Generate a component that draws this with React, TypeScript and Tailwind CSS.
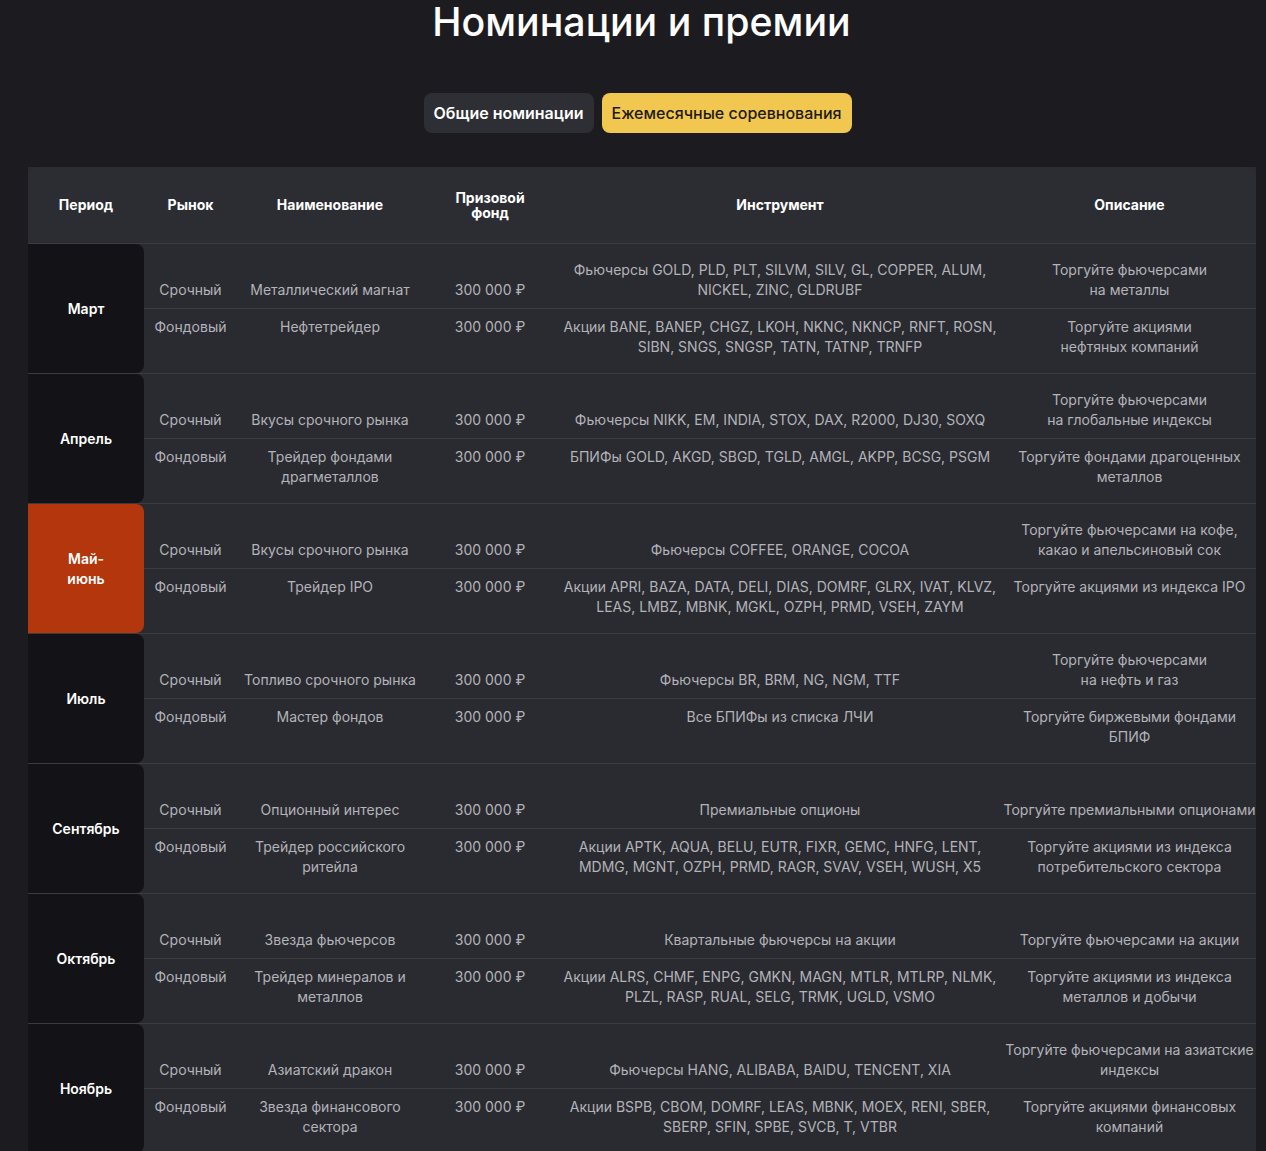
import React from "react";

type Row = {
  market: string;
  name: string[];
  prize: string;
  instrument: string[];
  desc: string[];
};

type Group = {
  period: string[];
  active?: boolean;
  rows: [Row, Row];
};

const groups: Group[] = [
  {
    period: ["Март"],
    rows: [
      {
        market: "Срочный",
        name: ["Металлический магнат"],
        prize: "300 000 ₽",
        instrument: ["Фьючерсы GOLD, PLD, PLT, SILVM, SILV, GL, COPPER, ALUM,", "NICKEL, ZINC, GLDRUBF"],
        desc: ["Торгуйте фьючерсами", "на металлы"],
      },
      {
        market: "Фондовый",
        name: ["Нефтетрейдер"],
        prize: "300 000 ₽",
        instrument: ["Акции BANE, BANEP, CHGZ, LKOH, NKNC, NKNCP, RNFT, ROSN,", "SIBN, SNGS, SNGSP, TATN, TATNP, TRNFP"],
        desc: ["Торгуйте акциями", "нефтяных компаний"],
      },
    ],
  },
  {
    period: ["Апрель"],
    rows: [
      {
        market: "Срочный",
        name: ["Вкусы срочного рынка"],
        prize: "300 000 ₽",
        instrument: ["Фьючерсы NIKK, EM, INDIA, STOX, DAX, R2000, DJ30, SOXQ"],
        desc: ["Торгуйте фьючерсами", "на глобальные индексы"],
      },
      {
        market: "Фондовый",
        name: ["Трейдер фондами", "драгметаллов"],
        prize: "300 000 ₽",
        instrument: ["БПИФы GOLD, AKGD, SBGD, TGLD, AMGL, AKPP, BCSG, PSGM"],
        desc: ["Торгуйте фондами драгоценных", "металлов"],
      },
    ],
  },
  {
    period: ["Май-", "июнь"],
    active: true,
    rows: [
      {
        market: "Срочный",
        name: ["Вкусы срочного рынка"],
        prize: "300 000 ₽",
        instrument: ["Фьючерсы COFFEE, ORANGE, COCOA"],
        desc: ["Торгуйте фьючерсами на кофе,", "какао и апельсиновый сок"],
      },
      {
        market: "Фондовый",
        name: ["Трейдер IPO"],
        prize: "300 000 ₽",
        instrument: ["Акции APRI, BAZA, DATA, DELI, DIAS, DOMRF, GLRX, IVAT, KLVZ,", "LEAS, LMBZ, MBNK, MGKL, OZPH, PRMD, VSEH, ZAYM"],
        desc: ["Торгуйте акциями из индекса IPO"],
      },
    ],
  },
  {
    period: ["Июль"],
    rows: [
      {
        market: "Срочный",
        name: ["Топливо срочного рынка"],
        prize: "300 000 ₽",
        instrument: ["Фьючерсы BR, BRM, NG, NGM, TTF"],
        desc: ["Торгуйте фьючерсами", "на нефть и газ"],
      },
      {
        market: "Фондовый",
        name: ["Мастер фондов"],
        prize: "300 000 ₽",
        instrument: ["Все БПИФы из списка ЛЧИ"],
        desc: ["Торгуйте биржевыми фондами", "БПИФ"],
      },
    ],
  },
  {
    period: ["Сентябрь"],
    rows: [
      {
        market: "Срочный",
        name: ["Опционный интерес"],
        prize: "300 000 ₽",
        instrument: ["Премиальные опционы"],
        desc: ["Торгуйте премиальными опционами"],
      },
      {
        market: "Фондовый",
        name: ["Трейдер российского", "ритейла"],
        prize: "300 000 ₽",
        instrument: ["Акции APTK, AQUA, BELU, EUTR, FIXR, GEMC, HNFG, LENT,", "MDMG, MGNT, OZPH, PRMD, RAGR, SVAV, VSEH, WUSH, X5"],
        desc: ["Торгуйте акциями из индекса", "потребительского сектора"],
      },
    ],
  },
  {
    period: ["Октябрь"],
    rows: [
      {
        market: "Срочный",
        name: ["Звезда фьючерсов"],
        prize: "300 000 ₽",
        instrument: ["Квартальные фьючерсы на акции"],
        desc: ["Торгуйте фьючерсами на акции"],
      },
      {
        market: "Фондовый",
        name: ["Трейдер минералов и", "металлов"],
        prize: "300 000 ₽",
        instrument: ["Акции ALRS, CHMF, ENPG, GMKN, MAGN, MTLR, MTLRP, NLMK,", "PLZL, RASP, RUAL, SELG, TRMK, UGLD, VSMO"],
        desc: ["Торгуйте акциями из индекса", "металлов и добычи"],
      },
    ],
  },
  {
    period: ["Ноябрь"],
    rows: [
      {
        market: "Срочный",
        name: ["Азиатский дракон"],
        prize: "300 000 ₽",
        instrument: ["Фьючерсы HANG, ALIBABA, BAIDU, TENCENT, XIA"],
        desc: ["Торгуйте фьючерсами на азиатские", "индексы"],
      },
      {
        market: "Фондовый",
        name: ["Звезда финансового", "сектора"],
        prize: "300 000 ₽",
        instrument: ["Акции BSPB, CBOM, DOMRF, LEAS, MBNK, MOEX, RENI, SBER,", "SBERP, SFIN, SPBE, SVCB, T, VTBR"],
        desc: ["Торгуйте акциями финансовых", "компаний"],
      },
    ],
  },
];

const Lines = ({ lines }: { lines: string[] }) => (
  <div className="flex flex-col items-center">
    {lines.map((l, i) => (
      <span key={i} className="whitespace-nowrap">
        {l}
      </span>
    ))}
  </div>
);

const SubRow = ({ row, first }: { row: Row; first: boolean }) => (
  <div
    className={
      first
        ? "grid h-[65px] grid-cols-[93px_186px_134px_446px_253px] items-end border-b border-[#3b3c42] pb-2"
        : "grid h-[64px] grid-cols-[93px_186px_134px_446px_253px] items-start pt-2"
    }
  >
    <div className="flex justify-center">{row.market}</div>
    <Lines lines={row.name} />
    <div className="flex justify-center">{row.prize}</div>
    <Lines lines={row.instrument} />
    <Lines lines={row.desc} />
  </div>
);

export default function App() {
  return (
    <div
      className="min-h-screen bg-[#1c1c20] pb-10 pt-[2px] text-white"
      style={{ fontFamily: "Inter, 'Noto Sans', sans-serif" }}
    >
      <h1 className="pl-[17px] text-center text-[39.3px] font-medium leading-[40px] text-white">
        Номинации и премии
      </h1>

      <div className="mt-[51px] flex justify-center gap-2 pl-[9px]">
        <button className="h-10 rounded-lg bg-[#2e2f35] px-[10px] text-base font-semibold text-white">
          Общие номинации
        </button>
        <button className="h-10 rounded-lg bg-[#f1c74f] px-[10px] text-base font-medium text-[#1d1b16]">
          Ежемесячные соревнования
        </button>
      </div>

      <div className="ml-[28px] mt-[34px] w-[1228px] bg-[#2a2b30] text-sm leading-5 text-[#b3b3b9]">
        <div className="grid h-[77px] grid-cols-[116px_93px_186px_134px_446px_253px] items-center rounded-t-[10px] border-b border-[#3b3c42] bg-[#2c2d33] text-center font-bold text-white">
          <div>Период</div>
          <div>Рынок</div>
          <div>Наименование</div>
          <div className="leading-[15px]">
            Призовой
            <br />
            фонд
          </div>
          <div>Инструмент</div>
          <div>Описание</div>
        </div>

        {groups.map((g, gi) => (
          <div key={gi} className="flex border-b border-[#3b3c42]">
            <div
              className={
                g.active
                  ? "flex w-[116px] flex-col items-center justify-center rounded-r-lg bg-[#b3360d] font-semibold text-white"
                  : "flex w-[116px] flex-col items-center justify-center rounded-r-lg bg-[#131317] font-semibold text-white"
              }
            >
              {g.period.map((p, i) => (
                <span key={i}>{p}</span>
              ))}
            </div>
            <div className="flex flex-col">
              <SubRow row={g.rows[0]} first />
              <SubRow row={g.rows[1]} first={false} />
            </div>
          </div>
        ))}
      </div>
    </div>
  );
}
